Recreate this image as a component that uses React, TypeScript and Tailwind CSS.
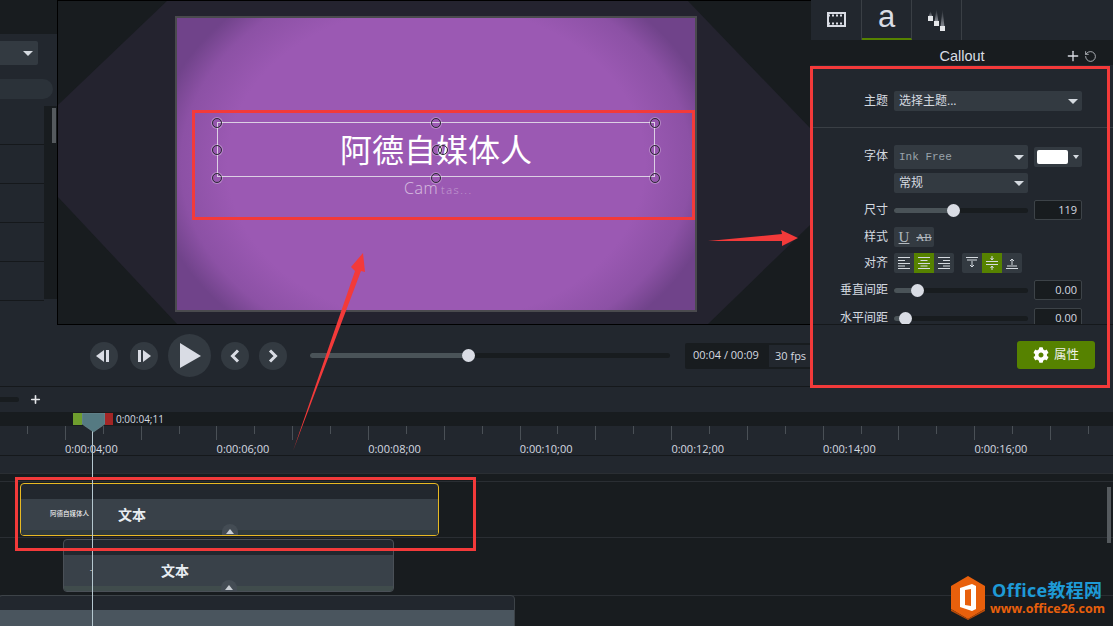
import React from 'react';
import { FaCog } from 'react-icons/fa';
import { Plus, RotateCcw } from 'lucide-react';

function Caret({ w = 'big' }: { w?: 'big' | 'small' }) {
  return w === 'big' ? (
    <span className="w-0 h-0 border-x-[5px] border-t-[5px] border-x-transparent border-t-[#d5dae0]" />
  ) : (
    <span className="w-0 h-0 border-x-[3px] border-t-[4px] border-x-transparent border-t-[#d5dae0]" />
  );
}

function Select({ width, height, children }: { width: string; height: string; children: React.ReactNode }) {
  return (
    <div className={`${width} ${height} flex items-center justify-between pl-[5px] pr-[4px] rounded-[2px] bg-[#333a41] text-[12px] text-[#d5dae0]`}>
      {children}
      <Caret />
    </div>
  );
}

function Label({ children }: { children: React.ReactNode }) {
  return <div className="w-[77px] text-right text-[12px] leading-none text-[#d5dae0]">{children}</div>;
}

function Slider({ pct }: { pct: number }) {
  return (
    <div className="relative w-[134px] h-[5px] rounded-full bg-[#181c1f]">
      <div className="h-full rounded-full bg-[#4a5358]" style={{ width: `${pct}%` }} />
      <div className="absolute top-[-4px] w-[13px] h-[13px] rounded-full bg-[#d9dce4] -ml-[6px]" style={{ left: `${pct}%` }} />
    </div>
  );
}

function NumBox({ value }: { value: string }) {
  return (
    <div className="w-[48px] h-[20px] shrink-0 rounded-[2px] border border-[#3d4348] bg-[#181c1f] text-right pr-[4px] text-[11px] leading-[18px] text-[#d5dae0]">
      {value}
    </div>
  );
}

function AlignIcon({ kind }: { kind: number }) {
  const c = '#d5dae0';
  if (kind < 3) {
    const shortX = kind === 0 ? [3, 10] : kind === 1 ? [5.5, 12.5] : [8, 15];
    return (
      <svg width="18" height="14" viewBox="0 0 18 14" stroke={c} strokeWidth="1" fill="none">
        <path d="M3 1.5H15M3 7.5H15M3 12.5H15" />
        <path d={`M${shortX[0]} 4.5H${shortX[1]}M${shortX[0]} 10H${shortX[1]}`} />
      </svg>
    );
  }
  return (
    <svg width="18" height="16" viewBox="0 0 18 16" stroke={c} strokeWidth="1" fill="none">
      {kind === 3 && <path d="M3 2.5H15M4 5H14M9 6V12M7 10L9 12L11 10" />}
      {kind === 4 && <path d="M3 6.5H15M3 9.5H15M9 1V5M7.5 3L9 5L10.5 3M9 15V11M7.5 13L9 11L10.5 13" />}
      {kind === 5 && <path d="M3 13.5H15M4 11H14M9 10V4M7 6L9 4L11 6" />}
    </svg>
  );
}

function AlignGroup({ kinds, active }: { kinds: number[]; active: number }) {
  return (
    <div className="flex h-[20px] rounded-[2px] bg-[#333a41] overflow-hidden">
      {kinds.map((k) => (
        <div key={k} className={`w-[20px] flex items-center justify-center ${k === active ? 'bg-[#568200]' : ''}`}>
          <AlignIcon kind={k} />
        </div>
      ))}
    </div>
  );
}

function RoundBtn({ children }: { children: React.ReactNode }) {
  return <div className="w-[28px] h-[28px] rounded-full bg-[#333a41] flex items-center justify-center">{children}</div>;
}

function LeftPanel() {
  return (
    <div className="w-[58px] shrink-0 flex flex-col border-r border-black bg-[#22272e]">
      <div className="h-[34px] bg-[#181c1f]" />
      <div className="h-[38px] flex items-center">
        <div className="w-[38px] h-[24px] flex items-center justify-end pr-[5px] rounded-r-[2px] bg-[#333a41]">
          <Caret />
        </div>
      </div>
      <div className="h-[34px] pt-[7px]">
        <div className="w-[53px] h-[20px] rounded-r-full bg-[#2b3239]" />
      </div>
      <div className="flex-1 flex">
        <div className="w-[44px] flex flex-col">
          {[0, 1, 2, 3, 4].map((i) => (
            <div key={i} className="h-[39px] border-b border-[#15181b]" />
          ))}
        </div>
        <div className="w-[13px] h-[193px] bg-[#181c1f] pl-[8px] pt-[2px]">
          <div className="w-[4px] h-[35px] bg-[#555a5e]" />
        </div>
      </div>
    </div>
  );
}

function Preview() {
  return (
    <div className="relative flex-1 bg-[#181c1f] border-t border-b border-black overflow-hidden">
      <svg className="absolute left-0 top-0" width="752" height="324" viewBox="0 0 752 324">
        <polygon points="0,104 110,-1 629,-1 752,127 752,224 649,324 120,324 0,196" fill="#24232f" />
      </svg>
      {/* video canvas */}
      <div className="absolute left-[117px] top-[15px] w-[522px] h-[296px] border-2 border-[#4a4a4e] bg-[radial-gradient(ellipse_290px_220px_at_center,#9b59b3_72%,#8c51a5_88%,#70438a_98%)]">
        <div className="absolute left-[40px] top-[104px] w-[438px] h-[55px] border-[1.5px] border-[#dcd0e4]" />
        <div className="absolute left-[40px] top-[113px] w-[438px] text-center text-[32px] leading-[38px] font-normal text-white">阿德自媒体人</div>
        <div className="absolute left-[227px] top-[158px] flex items-baseline gap-[3px] text-white font-light">
          <span className="text-[16px] tracking-[0.5px] opacity-60">Cam</span>
          <span className="text-[11px] tracking-[1.5px] opacity-40">tas...</span>
        </div>
        {[
          [40, 104],
          [259, 104],
          [478, 104],
          [40, 131],
          [260, 131],
          [266, 131],
          [478, 131],
          [40, 159],
          [259, 159],
          [478, 159],
        ].map(([x, y], i) => (
          <div
            key={i}
            className="absolute w-[10px] h-[10px] rounded-full border border-[#2c2c34] ring-1 ring-white/30 -ml-[5px] -mt-[4px]"
            style={{ left: x, top: y }}
          />
        ))}
      </div>
    </div>
  );
}

function Controls() {
  return (
    <div className="h-[62px] flex items-center bg-[#22272e] border-b border-[#15181b] relative">
      <div className="ml-[90px]">
        <RoundBtn>
          <svg width="16" height="14" viewBox="0 0 16 14" fill="#d9dce4">
            <polygon points="0,7 8,1 8,13" />
            <rect x="10" y="1" width="3" height="12" />
          </svg>
        </RoundBtn>
      </div>
      <div className="ml-[12px]">
        <RoundBtn>
          <svg width="16" height="14" viewBox="0 0 16 14" fill="#d9dce4">
            <rect x="2" y="1" width="3" height="12" />
            <polygon points="7,1 15,7 7,13" />
          </svg>
        </RoundBtn>
      </div>
      <div className="ml-[10px] w-[43px] h-[43px] rounded-full bg-[#333a41] flex items-center justify-center">
        <svg width="22" height="26" viewBox="0 0 22 26" fill="#d9dce4" className="ml-[3px]">
          <polygon points="0,0 21,13 0,25" />
        </svg>
      </div>
      <div className="ml-[10px]">
        <RoundBtn>
          <svg width="12" height="14" viewBox="0 0 12 14" fill="none" stroke="#d9dce4" strokeWidth="3">
            <path d="M9 1.5L3.5 7L9 12.5" />
          </svg>
        </RoundBtn>
      </div>
      <div className="ml-[10px]">
        <RoundBtn>
          <svg width="12" height="14" viewBox="0 0 12 14" fill="none" stroke="#d9dce4" strokeWidth="3">
            <path d="M3 1.5L8.5 7L3 12.5" />
          </svg>
        </RoundBtn>
      </div>
      <div className="relative ml-[23px] w-[360px] h-[5px] rounded-full bg-[#181c1f]">
        <div className="w-[158px] h-full rounded-full bg-[#4a5358]" />
        <div className="absolute left-[152px] top-[-4px] w-[13px] h-[13px] rounded-full bg-[#d9dce4]" />
      </div>
      <div className="ml-[15px] w-[125px] h-[26px] flex items-center justify-between rounded-l-[2px] bg-[#181c1f] text-[11px] text-[#d5dae0]">
        <span className="pl-[8px]">00:04 / 00:09</span>
        <span className="w-[41px] h-[22px] leading-[22px] pl-[6px] bg-[#22272e]">30 fps</span>
      </div>
    </div>
  );
}

function RightPanel() {
  return (
    <div className="flex-1 flex flex-col bg-[#22272e]">
      <div className="h-[40px] flex pl-[1px] bg-[#22272e]">
        <div className="w-[50px] flex items-center justify-center border-r border-[#3a3f45]">
          <svg width="20" height="15" viewBox="0 0 20 15" className="mb-[1px]">
            <rect x="1" y="1" width="17" height="13" fill="none" stroke="#d9dce4" strokeWidth="2" />
            <path d="M1 3.5H18M1 11.5H18" stroke="#d9dce4" strokeWidth="2" strokeDasharray="2 2" />
          </svg>
        </div>
        <div className="w-[50px] flex items-start justify-center border-r border-[#3a3f45] border-b-2 border-b-[#568200] text-[31px] leading-[34px] text-[#d9dce4] font-['Liberation_Sans',sans-serif]">
          a
        </div>
        <div className="w-[50px] flex items-center justify-center border-r border-[#3a3f45]">
          <svg width="20" height="24" viewBox="0 0 20 24">
            <defs>
              <linearGradient id="trail" x1="0" y1="0" x2="0" y2="1">
                <stop offset="0" stopColor="#d9dce4" stopOpacity="0" />
                <stop offset="1" stopColor="#d9dce4" stopOpacity="0.55" />
              </linearGradient>
            </defs>
            <polygon points="3.5,3 5.5,9 1.5,9" fill="url(#trail)" />
            <polygon points="9.5,1 11.5,14 7.5,14" fill="url(#trail)" />
            <polygon points="15.5,1 17.5,19 13.5,19" fill="url(#trail)" />
            <rect x="1" y="8" width="5" height="5" fill="#e5e7ea" />
            <rect x="7" y="13" width="5" height="5" fill="#e5e7ea" />
            <rect x="13" y="18" width="5" height="5" fill="#e5e7ea" />
          </svg>
        </div>
      </div>
      <div className="relative h-[25px] bg-[#181c1f] text-center text-[14.5px] leading-[32px] text-[#d9dce4] font-['Liberation_Sans',sans-serif]">
        Callout
        <div className="absolute right-[16px] top-[8px] flex items-center gap-[3px]">
          <Plus size={16} color="#d9dce4" strokeWidth={2} />
          <RotateCcw size={13} color="#c5c9cf" strokeWidth={1.5} />
        </div>
      </div>
      <div className="relative h-[260px] overflow-hidden border-b border-[#15181b]">
        <div className="flex items-center gap-[6px] mt-[26px]">
          <Label>主题</Label>
          <Select width="w-[188px]" height="h-[20px]">选择主题...</Select>
        </div>
        <div className="mt-[16px] border-t border-[#3a3f45]" />
        <div className="flex items-start gap-[6px] mt-[17px]">
          <div className="pt-[5px]"><Label>字体</Label></div>
          <Select width="w-[134px]" height="h-[24px]">
            <span className="font-['Liberation_Mono',monospace] text-[11px] text-[#9aa3ab]">Ink Free</span>
          </Select>
          <div className="mt-[2px] w-[48px] h-[20px] flex items-center justify-between pl-[3px] pr-[3px] rounded-[2px] bg-[#333a41]">
            <div className="w-[31px] h-[14px] rounded-[2px] bg-white" />
            <Caret w="small" />
          </div>
        </div>
        <div className="ml-[83px] mt-[4px]">
          <Select width="w-[134px]" height="h-[20px]">常规</Select>
        </div>
        <div className="flex items-center gap-[6px] mt-[7px]">
          <Label>尺寸</Label>
          <Slider pct={44} />
          <NumBox value="119" />
        </div>
        <div className="flex items-center gap-[6px] mt-[7px]">
          <Label>样式</Label>
          <div className="w-[40px] h-[20px] flex items-center rounded-[2px] bg-[#333a41] text-[#b4bac0] font-['Liberation_Serif',serif]">
            <span className="w-[20px] text-center text-[15px] leading-none underline">U</span>
            <span className="w-[20px] text-center text-[11px] leading-none line-through">AB</span>
          </div>
        </div>
        <div className="flex items-center gap-[6px] mt-[6px]">
          <Label>对齐</Label>
          <AlignGroup kinds={[0, 1, 2]} active={1} />
          <div className="ml-[2px]"><AlignGroup kinds={[3, 4, 5]} active={4} /></div>
        </div>
        <div className="flex items-center gap-[6px] mt-[7px]">
          <Label>垂直间距</Label>
          <Slider pct={17} />
          <NumBox value="0.00" />
        </div>
        <div className="flex items-center gap-[6px] mt-[8px]">
          <Label>水平间距</Label>
          <Slider pct={8} />
          <NumBox value="0.00" />
        </div>
        <div className="absolute right-[4px] top-[12px] w-[2px] h-[155px] bg-[#3f454b]" />
      </div>
      <div className="flex-1 flex justify-end pr-[18px] pt-[16px]">
        <div className="w-[78px] h-[28px] flex items-center justify-center gap-[5px] rounded-[3px] bg-[#568200] text-[12.5px] text-[#eef1e8]">
          <FaCog size={16} color="#ffffff" />
          属性
        </div>
      </div>
    </div>
  );
}

function Ruler() {
  const ticks = Array.from({ length: 29 }, (_, i) => i);
  const labels = ['0:00:04;00', '0:00:06;00', '0:00:08;00', '0:00:10;00', '0:00:12;00', '0:00:14;00', '0:00:16;00'];
  return (
    <div className="h-[30px] flex flex-col bg-[#22272e] border-b border-[#15181b] overflow-hidden">
      <div className="h-[15px] shrink-0 flex pl-[27px]">
        {ticks.map((i) => (
          <div key={i} className="w-[37.9px] shrink-0">
            <div className={`w-px bg-[#4a5056] ${i % 2 === 0 ? 'h-[8px]' : 'h-[14px]'}`} />
          </div>
        ))}
      </div>
      <div className="flex pl-[65px] text-[11px] leading-[16px] text-[#d5dae0]">
        {labels.map((l) => (
          <div key={l} className="w-[151.6px] shrink-0">{l}</div>
        ))}
      </div>
    </div>
  );
}

function Clip({
  left,
  top,
  width,
  border,
  label,
  labelLeft,
  arrowLeft,
  strip,
  mini,
  miniLeft,
}: {
  left: number;
  top: number;
  width: number;
  border: string;
  label: string;
  labelLeft: number;
  arrowLeft: number;
  strip: string;
  mini: string;
  miniLeft: number;
}) {
  return (
    <div className={`absolute h-[53px] rounded-[4px] border ${border} bg-[#22272e] overflow-hidden flex flex-col`} style={{ left, top, width }}>
      <div className="h-[15px] shrink-0" />
      <div className="relative flex-1 bg-[#394149]">
        <div className={`absolute left-0 right-0 bottom-0 h-[5px] ${strip}`} />
        <div className="absolute top-[12px] text-[6.5px] leading-none text-white whitespace-nowrap" style={{ left: miniLeft }}>{mini}</div>
        <div className="absolute top-[7px] text-[14px] leading-[18px] font-bold text-[#e8edf2]" style={{ left: labelLeft }}>{label}</div>
        <div className="absolute bottom-0 w-[16px] h-[11px] rounded-t-full bg-[#444c54] flex items-end justify-center pb-[1px]" style={{ left: arrowLeft }}>
          <span className="w-0 h-0 border-x-[4px] border-b-[5px] border-x-transparent border-b-[#c9ced4]" />
        </div>
      </div>
    </div>
  );
}

function Logo() {
  return (
    <div className="absolute left-[950px] top-[576px] flex items-center gap-[6px]">
      <svg width="36" height="44" viewBox="0 0 36 44">
        <polygon points="18,0 35,10 35,33 18,43 1,33 1,10" fill="#e8600c" />
        <polygon points="1,33 18,43 35,33 35,35 18,44 1,35" fill="#b84a08" />
        <polygon points="10,12 22,8 26,10 26,33 22,35 10,31" fill="#fff" />
        <polygon points="15,14 21,13 21,30 15,29" fill="#e8600c" />
      </svg>
      <div className="flex flex-col font-bold whitespace-nowrap font-['Open_Sans','Noto_Sans_CJK_SC',sans-serif]">
        <div className="text-[18px] leading-[22px] text-[#1e9ad6] tracking-[0.3px]">Office教程网</div>
        <div className="text-[12.5px] leading-[16px] text-[#e8600c] -ml-[2px]">www.office26.com</div>
      </div>
    </div>
  );
}

export default function App() {
  return (
    <div className="relative w-[1113px] h-[626px] overflow-hidden bg-[#181c1f] font-['Open_Sans','Noto_Sans_CJK_SC',sans-serif]">
      <div className="flex h-[387px]">
        <div className="w-[811px] shrink-0 flex flex-col">
          <div className="h-[325px] flex">
            <LeftPanel />
            <Preview />
          </div>
          <Controls />
        </div>
        <RightPanel />
      </div>

      {/* zoom bar */}
      <div className="h-[25px] flex items-center bg-[#22272e]">
        <div className="w-[19px] h-[5px] rounded-r-full bg-[#181c1f]" />
        <Plus size={13} color="#e5e7ea" strokeWidth={3} className="ml-[10px]" />
      </div>
      {/* scrub strip */}
      <div className="h-[14px] bg-[#181c1f] pl-[116px] text-[10px] leading-[14px] text-[#d5dae0]">0:00:04;11</div>
      <Ruler />
      <div className="h-[18px] bg-[#22272e] border-b border-[#2a2e33]" />

      {/* tracks */}
      <div className="h-[7px]" />
      <div className="h-[56px] border-t border-[#2a2e33]" />
      <div className="h-[58px] border-t border-[#2a2e33]" />
      <div className="h-[31px] border-t border-[#2a2e33]" />

      <Clip left={20} top={483} width={419} border="border-[#e8b923]" label="文本" labelLeft={97} arrowLeft={201} strip="bg-[#2f3a3c]" mini="阿德自媒体人" miniLeft={29} />
      <Clip left={63} top={539} width={331} border="border-[#4a5057]" label="文本" labelLeft={97} arrowLeft={157} strip="bg-[#404c4c]" mini="-" miniLeft={26} />
      <div className="absolute left-[-2px] top-[595px] w-[517px] h-[40px] rounded-[4px] border border-[#3d4348] bg-[#22272e] pt-[14px]">
        <div className="h-full bg-[#4a555e]" />
      </div>
      <div className="absolute right-[2px] top-[487px] w-[4px] h-[56px] bg-[#555a5e]" />

      {/* playhead */}
      <div className="absolute left-[92px] top-[430px] bottom-0 w-px bg-[#b5c7cf]" />
      <div className="absolute left-[73px] top-[413px] w-[9px] h-[12px] bg-[#6f9e2e]" />
      <div className="absolute left-[105px] top-[413px] w-[8px] h-[12px] bg-[#a32626]" />
      <svg className="absolute left-[82px] top-[413px]" width="23" height="20" viewBox="0 0 23 20">
        <polygon points="0,0 23,0 23,11 11.5,19 0,11" fill="#557a82" stroke="#7c969c" strokeWidth="0.5" />
      </svg>

      {/* annotations */}
      <div className="absolute left-[192px] top-[110px] w-[503px] h-[110px] border-[3px] border-[#f33a3a]" />
      <div className="absolute left-[810px] top-[66px] w-[300px] h-[322px] border-[3px] border-[#f33a3a]" />
      <div className="absolute left-[15px] top-[477px] w-[461px] h-[74px] border-[3px] border-[#f33a3a]" />
      <svg className="absolute left-0 top-0 pointer-events-none" width="1113" height="626" viewBox="0 0 1113 626">
        <polygon points="293,451 355,271 351,267 363,253 365,272 361,271" fill="#f33a3a" />
        <polygon points="708,241 782,234 781,230 798,238 782,246 782,241" fill="#f33a3a" />
      </svg>

      <Logo />
    </div>
  );
}
